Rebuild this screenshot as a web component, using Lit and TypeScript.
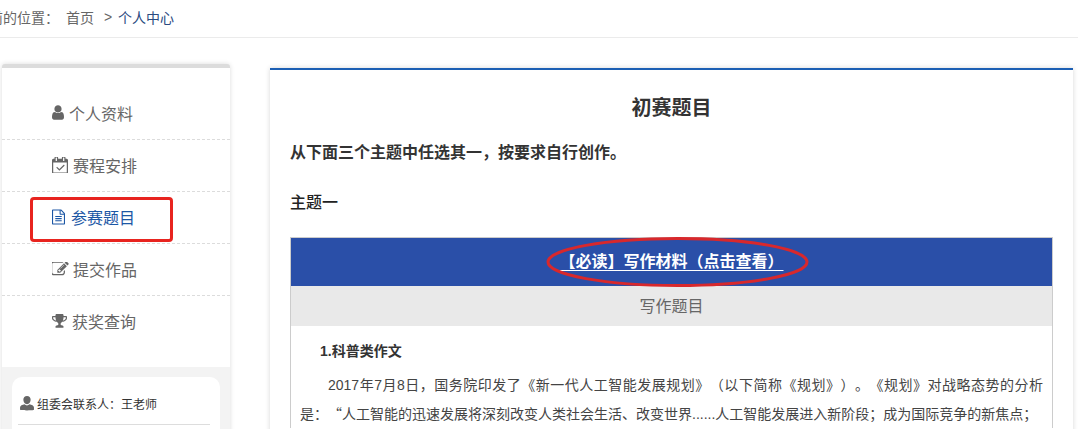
import { LitElement, html, css, svg } from "lit";
import { customElement } from "lit/decorators.js";

const ICONS = {
  user: { vb: "256 128 1280 1536", w: 12, h: 15, gap: 5, d: "M1536 1399q0 109-62.5 187t-150.5 78h-854q-88 0-150.5-78t-62.5-187q0-85 8.5-160.5t31.5-152 58.5-131 94-89 134.5-34.5q131 128 313 128t313-128q76 0 134.5 34.5t94 89 58.5 131 31.5 152 8.5 160.5zm-256-887q0 159-112.5 271.5t-271.5 112.5-271.5-112.5-112.5-271.5 112.5-271.5 271.5-112.5 271.5 112.5 112.5 271.5z" },
  cal: { vb: "0 64 1664 1664", w: 16, h: 16, gap: 5, d: "M1303 964l-512 512q-10 9-23 9t-23-9l-288-288q-9-10-9-23t9-22l46-46q9-9 22-9t23 9l220 220 444-444q10-9 23-9t22 9l46 46q9 9 9 22t-9 23zm-1175 700h1408v-1024h-1408v1024zm384-1216v-288q0-14-9-23t-23-9h-64q-14 0-23 9t-9 23v288q0 14 9 23t23 9h64q14 0 23-9t9-23zm768 0v-288q0-14-9-23t-23-9h-64q-14 0-23 9t-9 23v288q0 14 9 23t23 9h64q14 0 23-9t9-23zm384-64v1280q0 52-38 90t-90 38h-1408q-52 0-90-38t-38-90v-1280q0-52 38-90t90-38h128v-96q0-66 47-113t113-47h64q66 0 113 47t47 113v96h384v-96q0-66 47-113t113-47h64q66 0 113 47t47 113v96h128q52 0 90 38t38 90z" },
  file: { vb: "128 0 1536 1792", w: 13, h: 16, gap: 6, d: "M1596 380q28 28 48 76t20 88v1152q0 40-28 68t-68 28h-1344q-40 0-68-28t-28-68v-1600q0-40 28-68t68-28h896q40 0 88 20t76 48zm-444-244v376h376q-10-29-22-41l-313-313q-12-12-41-22zm384 1528v-1024h-416q-40 0-68-28t-28-68v-416h-768v1536h1280zm-1024-864q0-14 9-23t23-9h704q14 0 23 9t9 23v64q0 14-9 23t-23 9h-704q-14 0-23-9t-9-23v-64zm736 224q14 0 23 9t9 23v64q0 14-9 23t-23 9h-704q-14 0-23-9t-9-23v-64q0-14 9-23t23-9h704zm0 256q14 0 23 9t9 23v64q0 14-9 23t-23 9h-704q-14 0-23-9t-9-23v-64q0-14 9-23t23-9h704z" },
  edit: { vb: "128 192 1664 1408", w: 17, h: 14, gap: 4, d: "M888 1184l116-116-152-152-116 116v56h96v96h56zm440-720q-16-16-33 1l-350 350q-17 17-1 33t33-1l350-350q17-17 1-33zm80 594v190q0 119-84.5 203.5t-203.5 84.5h-832q-119 0-203.5-84.5t-84.5-203.5v-832q0-119 84.5-203.5t203.5-84.5h832q63 0 117 25 15 7 18 23 3 17-9 29l-49 49q-14 14-32 8-23-6-45-6h-832q-66 0-113 47t-47 113v832q0 66 47 113t113 47h832q66 0 113-47t47-113v-126q0-13 9-22l64-64q15-15 35-7t20 29zm-96-738l288 288-672 672h-288v-288zm444 132l-92 92-288-288 92-92q28-28 68-28t68 28l152 152q28 28 28 68t-28 68z" },
  trophy: { vb: "64 192 1664 1472", w: 15, h: 14, gap: 5, d: "M522 883q-74-162-74-371h-256v96q0 78 94.5 162t235.5 113zm1078-275v-96h-256q0 209-74 371 141-29 235.5-113t94.5-162zm128-128v128q0 71-41.5 143t-112 130-173 97.5-215.5 44.5q-42 54-95 95-38 34-52.5 72.5t-14.5 89.5q0 54 30.5 91t97.5 37q75 0 133.5 45.5t58.5 114.5v64q0 14-9 23t-23 9h-832q-14 0-23-9t-9-23v-64q0-69 58.5-114.5t133.5-45.5q67 0 97.5-37t30.5-91q0-51-14.5-89.5t-52.5-72.5q-53-41-95-95-113-5-215.5-44.5t-173-97.5-112-130-41.5-143v-128q0-40 28-68t68-28h288v-96q0-66 47-113t113-47h576q66 0 113 47t47 113v96h288q40 0 68 28t28 68z" },
};
type IconName = keyof typeof ICONS;

const MENU: { icon: IconName; label: string; active?: boolean }[] = [
  { icon: "user", label: "个人资料" },
  { icon: "cal", label: "赛程安排" },
  { icon: "file", label: "参赛题目", active: true },
  { icon: "edit", label: "提交作品" },
  { icon: "trophy", label: "获奖查询" },
];

@customElement("app-root")
export class AppRoot extends LitElement {
  static styles = css`
    :host {
      display: block;
      position: relative;
      width: 1078px;
      height: 429px;
      overflow: hidden;
      background: #fff;
      font-family: "Liberation Sans", "Noto Sans CJK SC", sans-serif;
      color: #333;
      text-spacing-trim: space-all;
    }
    .crumb {
      height: 33px;
      padding-bottom: 4px;
      border-bottom: 1px solid #ebebeb;
      display: flex;
      align-items: center;
      font-size: 14px;
      color: #666;
    }
    .crumb .here { margin-left: -39px; width: 105px; flex: none; }
    .crumb .home { width: 38px; flex: none; }
    .crumb .sep { width: 14px; flex: none; }
    .crumb .cur { color: #2a4a7f; }
    .body {
      display: flex;
      align-items: flex-start;
      padding: 26px 0 0 2px;
      background: #fff;
    }
    .side {
      position: relative;
      width: 228px;
      flex: none;
      background: #f3f3f3;
      border-top: 4px solid #dcdcdc;
      border-radius: 3px 3px 0 0;
      box-shadow: 0 0 5px rgba(0, 0, 0, 0.14);
    }
    .bump {
      position: absolute;
      top: -7px;
      right: -10px;
      width: 24px;
      height: 18px;
      border-radius: 9px;
      background: #fff;
      box-shadow: 0 1px 3px rgba(0, 0, 0, 0.08);
      z-index: -1;
    }
    .menu {
      background: #fff;
      padding: 20px 0 20px;
    }
    .item {
      height: 49px;
      padding: 0 0 2px 50px;
      display: flex;
      align-items: center;
      font-size: 16px;
      color: #666;
      border-bottom: 1px dashed #dcdcdc;
    }
    .item:last-child { border-bottom: 0; }
    .item.active { color: #1c57a5; }
    .item svg { flex: none; fill: currentColor; }
    .contact {
      margin: 10px 10px 0;
      padding: 0 10px 0 6px;
      height: 80px;
      background: #fff;
      border-radius: 10px;
    }
    .contact-row {
      height: 42px;
      padding: 5px 0 0 2px;
      border-bottom: 1px solid #ddd;
      display: flex;
      align-items: center;
      font-size: 12px;
      color: #333;
      gap: 3px;
    }
    .contact-row svg { fill: #666; flex: none; }
    .main {
      margin: 4px 0 0 40px;
      width: 803px;
      flex: none;
      border-top: 2px solid #1c5fb4;
      padding: 0 20px;
      box-sizing: border-box;
      background: #fff;
      box-shadow: 0 0 5px rgba(0, 0, 0, 0.16);
      height: 400px;
    }
    h1 {
      margin: 0;
      height: 71px;
      line-height: 76px;
      font-size: 20px;
      text-align: center;
      font-weight: 700;
      color: #333;
    }
    .lead {
      margin: 0;
      font-size: 16px;
      line-height: 24px;
      font-weight: 700;
      color: #333;
    }
    .theme {
      margin: 26px 0 0;
      font-size: 16px;
      line-height: 24px;
      font-weight: 500;
      color: #222;
    }
    .table {
      margin-top: 22px;
      border: 1px solid #ccc;
      border-bottom: 0;
      width: 763px;
      box-sizing: border-box;
    }
    .t-head {
      height: 48px;
      line-height: 48px;
      background: #2a4fa8;
      text-align: center;
      color: #fff;
      font-size: 16px;
      font-weight: 700;
    }
    .t-head span { text-decoration: underline; text-underline-offset: 3px; }
    .t-sub {
      height: 40px;
      line-height: 41px;
      background: #e9e9e9;
      text-align: center;
      color: #666;
      font-size: 16px;
    }
    .t-body { padding: 13px 9px 0; color: #444; }
    .t-title { margin: 0 0 0 20px; font-size: 14px; font-weight: 700; line-height: 24px; color: #333; }
    .t-text { margin: 8px 0 0; text-indent: 28px; line-height: 28px; font-size: 14px; text-align: justify; }
    .cjk { font-family: "Noto Sans CJK SC", sans-serif; }
    .red-box {
      position: absolute;
      left: 30px;
      top: 197px;
      width: 143px;
      height: 45px;
      box-sizing: border-box;
      border: 3px solid #e8241f;
      border-radius: 4px;
    }
    .red-ring { position: absolute; left: 545px; top: 236px; }
  `;

  private icon(name: IconName) {
    const i = ICONS[name];
    return html`<svg viewBox=${i.vb} width=${i.w} height=${i.h} style="margin-right:${i.gap}px">${svg`<path d=${i.d}></path>`}</svg>`;
  }

  render() {
    return html`
      <div class="crumb">
        <span class="here">您当前的位置&#xFF1A;</span>
        <span class="home">首页</span>
        <span class="sep">&gt;</span>
        <span class="cur">个人中心</span>
      </div>
      <div class="body">
        <aside class="side">
          <div class="bump"></div>
          <nav class="menu">
            ${MENU.map(
              (m) => html`<div class="item ${m.active ? "active" : ""}">${this.icon(m.icon)}<span>${m.label}</span></div>`
            )}
          </nav>
          <div class="contact">
            <div class="contact-row">
              <svg viewBox="1.500 1.500 13 14" width="14" height="15">
                <path d="M8 1.500c2.100 0 3.400 1.500 3.400 3.600 0 1.900-1.200 4-3.400 4S4.600 7 4.600 5.100C4.600 3 5.900 1.500 8 1.500zM5.700 9.300C6.300 10 7.100 10.400 8 10.400s1.700-.4 2.300-1.100c2 .4 4.200 1.200 4.200 3v1.900c0 .6-1.300.8-6.500.8s-6.500-.2-6.500-.8v-1.900c0-1.800 2.200-2.600 4.200-3z"></path>
              </svg>
              <span>组委会联系人&#xFF1A;王老师</span>
            </div>
          </div>
        </aside>
        <main class="main">
          <h1>初赛题目</h1>
          <p class="lead">从下面三个主题中任选其一&#xFF0C;按要求自行创作。</p>
          <p class="theme">主题一</p>
          <div class="table">
            <div class="t-head"><span>【必读】写作材料&#xFF08;点击查看&#xFF09;</span></div>
            <div class="t-sub">写作题目</div>
            <div class="t-body">
              <p class="t-title">1.科普类作文</p>
              <p class="t-text">2017年7月8日&#xFF0C;国务院印发了《新一代人工智能发展规划》&#xFF08;以下简称《规划》&#xFF09;。《规划》对战略态势的分析是&#xFF1A;<span class="cjk">“</span>人工智能的迅速发展将深刻改变人类社会生活、改变世界......人工智能发展进入新阶段&#xFF1B;成为国际竞争的新焦点&#xFF1B;</p>
            </div>
          </div>
        </main>
      </div>
      <div class="red-box"></div>
      <svg class="red-ring" width="266" height="54" viewBox="0 0 266 54" fill="none">
        <ellipse cx="132.500" cy="26" rx="129.500" ry="23.500" stroke="#d8282c" stroke-width="3"></ellipse>
      </svg>
    `;
  }
}
